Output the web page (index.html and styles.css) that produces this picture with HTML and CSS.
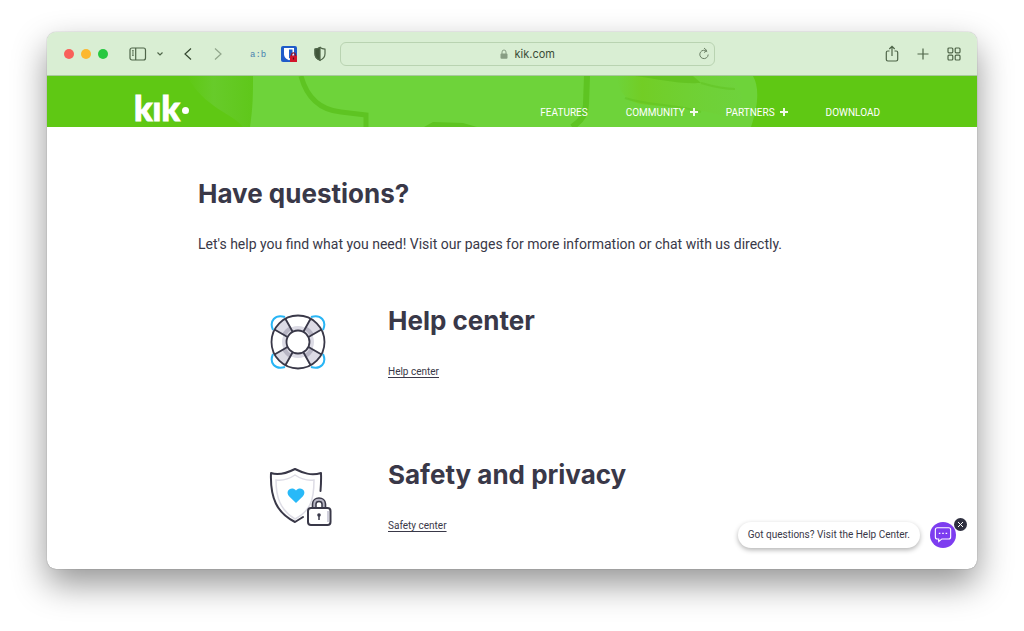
FILE: index.html
```html
<!DOCTYPE html>
<html lang="en">
<head>
    <meta charset="UTF-8">
    <meta name="viewport" content="width=device-width, initial-scale=1.0">
    <title>Kik - Help</title>
    <link rel="stylesheet" href="styles.css">
</head>
<body>
    <div class="window">
        <div class="toolbar">
            <div class="tools tools-left">
                <div class="lights">
                    <span class="light red"></span>
                    <span class="light yellow"></span>
                    <span class="light green"></span>
                </div>
                <button class="tool sidebar" aria-label="Sidebar">
                    <svg width="18" height="14" viewBox="0 0 18 14"><rect x="1" y="1" width="15.5" height="12" rx="2"/><path d="M6.700 1v12M3 3.800h1.800M3 6h1.800M3 8.200h1.800"/></svg>
                </button>
                <button class="tool chevron" aria-label="Tab groups">
                    <svg width="8" height="6" viewBox="0 0 8 6"><path d="M1.500 1.500L4 4l2.500-2.500"/></svg>
                </button>
                <button class="tool back" aria-label="Back">
                    <svg width="10" height="14" viewBox="0 0 10 14"><path d="M8 1.500L2 7l6 5.500"/></svg>
                </button>
                <button class="tool forward" aria-label="Forward">
                    <svg width="10" height="14" viewBox="0 0 10 14"><path d="M2 1.500L8 7l-6 5.500"/></svg>
                </button>
                <button class="tool ab">a:b</button>
                <button class="tool vault" aria-label="Password manager">
                    <svg width="16" height="16" viewBox="0 0 16 16">
                        <rect width="16" height="16" rx="2" fill="#1f5bc9" stroke="none"/>
                        <path d="M3 2h10v6c0 3.400-2.500 5.200-5 6.200C5.500 13.200 3 11.400 3 8z" fill="#fff" stroke="none"/>
                        <path d="M8 3.500h3.500V8c0 2-1.500 3.600-3.500 4.600z" fill="#1f5bc9" stroke="none"/>
                        <rect x="9" y="9.500" width="7" height="6.500" fill="#d2152b" stroke="none"/>
                        <path d="M10.500 10V8.800a2 2 0 0 1 4 0V10" stroke="#8b1530"/>
                        <path d="M12.500 11.500v2" stroke="#5a0a18"/>
                    </svg>
                </button>
                <button class="tool shield" aria-label="Privacy report">
                    <svg width="14" height="16" viewBox="0 0 14 16"><path d="M7 1.500c1.500 1 3.200 1.500 5 1.700v4.500c0 3.300-2 5.300-5 6.600-3-1.300-5-3.300-5-6.600V3.200C3.800 3 5.500 2.500 7 1.500z"/><path d="M7 1.500v12.800c-3-1.300-5-3.300-5-6.600V3.200C3.800 3 5.500 2.500 7 1.500z" class="solid"/></svg>
                </button>
            </div>
            <div class="address">
                <svg class="lock" width="8" height="10" viewBox="0 0 8 10"><rect x="0.500" y="4.500" width="7" height="5.300" rx="1" fill="#889d83"/><path d="M2 5V3a2 2 0 0 1 4 0v2" fill="none" stroke="#889d83"/></svg>
                <span>kik.com</span>
                <button class="tool reload" aria-label="Reload">
                    <svg width="12" height="14" viewBox="0 0 12 14"><path d="M9.200 4.700A4.200 4.200 0 1 0 10.200 7.500M6 1l3 2.700L6 5.500"/></svg>
                </button>
            </div>
            <div class="tools tools-right">
                <button class="tool" aria-label="Share">
                    <svg width="14" height="18" viewBox="0 0 14 18"><path d="M4.500 6H2.800C1.800 6 1.300 6.500 1.300 7.400v7.200c0 .9.500 1.400 1.500 1.400h8.400c1 0 1.500-.5 1.500-1.400V7.400c0-.9-.5-1.400-1.500-1.400H9.500M7 11V1.500M4.300 4L7 1.300 9.700 4"/></svg>
                </button>
                <button class="tool" aria-label="New tab">
                    <svg width="12" height="12" viewBox="0 0 12 12"><path d="M6 .5v11M.5 6h11"/></svg>
                </button>
                <button class="tool" aria-label="Tab overview">
                    <svg width="14" height="14" viewBox="0 0 14 14"><rect x="1" y="1" width="4.800" height="4.800" rx="1"/><rect x="8.200" y="1" width="4.800" height="4.800" rx="1"/><rect x="1" y="8.200" width="4.800" height="4.800" rx="1"/><rect x="8.200" y="8.200" width="4.800" height="4.800" rx="1"/></svg>
                </button>
            </div>
        </div>

        <header class="header">
            <svg class="header-art" viewBox="0 0 930 51" preserveAspectRatio="xMidYMid slice">
                <defs>
                    <linearGradient id="hand" x1="0" x2="1">
                        <stop offset="0" stop-color="#74cb1c" stop-opacity="0"/>
                        <stop offset="0.200" stop-color="#74cb1c" stop-opacity="0.700"/>
                        <stop offset="1" stop-color="#6fd040" stop-opacity="0.300"/>
                    </linearGradient>
                    <linearGradient id="leaf" x1="0" x2="1">
                        <stop offset="0" stop-color="#66cb27" stop-opacity="0"/>
                        <stop offset="0.400" stop-color="#67cb2a"/>
                        <stop offset="1" stop-color="#5fc71a"/>
                    </linearGradient>
                </defs>
                <path d="M140 0h66v51h-10c-8-12-40-20-56-51z" fill="url(#leaf)"/>
                <path d="M206 0h500c6 10 6 28-2 51H203c3-20 3-34 3-51z" fill="#6ed33a"/>
                <path d="M254 0c6 22 20 34 40 36l25 3v12" fill="none" stroke="#5ec422" stroke-width="5"/>
                <path d="M377 51l9-5 30 1 14 4z" fill="#5ec422"/>
                <path d="M540 0l-1 28c0 10-4 17-14 23" fill="none" stroke="#5ec422" stroke-width="6"/>
                <path d="M570 0h110c16 10 20 30 10 44-40-14-70-12-96-16-14-2-24-14-24-28z" fill="url(#hand)"/>
                <path d="M588 0c24 3 40 8 66 7l-8-7z" fill="#5fbf1c" opacity="0.700"/>
                <path d="M654 7c14 4 22 6 34 6M578 22c24 8 50 6 76 14" fill="none" stroke="#5fc21f" stroke-width="2" opacity="0.500"/>
            </svg>
            <div class="header-inner">
                <a href="#" class="logo">kık<span class="logo-dot"></span></a>
                <nav class="nav">
                    <a href="#">FEATURES</a>
                    <a href="#" class="wide">COMMUNITY <i class="plus"></i></a>
                    <a href="#">PARTNERS <i class="plus"></i></a>
                    <a href="#" class="wide">DOWNLOAD</a>
                </nav>
            </div>
        </header>

        <main class="content">
            <h1>Have questions?</h1>
            <p class="intro">Let's help you find what you need! Visit our pages for more information or chat with us directly.</p>

            <section class="topic">
                <div class="topic-icon">
                    <svg width="58" height="58" viewBox="0 0 58 58" fill="none">
                        <g stroke="#28b5f5" stroke-width="2">
                            <path d="M4 17C0 8 6 1 16 4M42 4c10-3 16 4 12 13M54 41c4 9-2 16-12 13M16 54C6 57 0 50 4 41"/>
                        </g>
                        <circle cx="29" cy="29" r="26.500" fill="#fff"/>
                        <g fill="#dcdbe5">
                            <path d="M17.500 5.500L24 18 18 24 5.500 17.500A26 26 0 0 1 17.500 5.500z"/>
                            <path d="M40.500 5.500L34 18 40 24 52.500 17.500A26 26 0 0 0 40.500 5.500z"/>
                            <path d="M17.500 52.500L24 40 18 34 5.500 40.500A26 26 0 0 0 17.500 52.500z"/>
                            <path d="M40.500 52.500L34 40 40 34 52.500 40.500A26 26 0 0 1 40.500 52.500z"/>
                        </g>
                        <circle cx="29" cy="29" r="14" stroke="#dcdbe5" stroke-width="4"/>
                        <path d="M22 15A16 16 0 0 0 15 22M36 15A16 16 0 0 1 43 22M22 43A16 16 0 0 1 15 36M36 43A16 16 0 0 0 43 36" stroke="#b7b5c4" stroke-width="4"/>
                        <g stroke="#393848" stroke-width="1.800">
                            <circle cx="29" cy="29" r="26.500"/>
                            <circle cx="29" cy="29" r="11.500" fill="#fff"/>
                            <path d="M16.500 6L23.500 18.500M5.500 16.500L18.500 24M41.500 6L34.500 18.500M52.500 16.500L39.500 24M16.500 52L23.500 39.500M5.500 41.500L18.500 34M41.500 52L34.500 39.500M52.500 41.500L39.500 34"/>
                        </g>
                    </svg>
                </div>
                <div>
                    <h2>Help center</h2>
                    <a href="#">Help center</a>
                </div>
            </section>

            <section class="topic">
                <div class="topic-icon">
                    <svg width="64" height="60" viewBox="0 0 64 60" fill="none">
                        <path d="M26 8c-6 4-12 6-19 5 0 17 4 30 19 39 15-8 19-18 19-39-7 1-13-1-19-5z" stroke="#dddce5" stroke-width="1.500"/>
                        <path d="M51.500 24c.5-6 .8-10 .5-18-10 3-18 0-26-4C18 6 10 9 2 6c-1 25 6 40 24 49l8-5" stroke="#393848" stroke-width="2" stroke-linecap="round" stroke-linejoin="round"/>
                        <path d="M27 36l-6.700-6.500c-5-5 2-11 6.700-6 4.700-5 11.700 1 6.700 6z" fill="#28b9f8"/>
                        <path d="M43.500 42v-5c0-8 13-8 13 0v5" fill="#b6b5c3" stroke="#393848" stroke-width="1.600"/>
                        <path d="M47 42v-5c0-3.500 6-3.500 6 0v5" fill="#fff" stroke="#393848" stroke-width="1.500"/>
                        <rect x="39" y="41" width="22.500" height="17" rx="3" fill="#fff" stroke="#393848" stroke-width="2"/>
                        <path d="M59 44v11" stroke="#d0cfdb" stroke-width="2"/>
                        <circle cx="50" cy="48" r="1.800" fill="#393848"/>
                        <path d="M50 48v5" stroke="#393848" stroke-width="1.500"/>
                    </svg>
                </div>
                <div>
                    <h2>Safety and privacy</h2>
                    <a href="#">Safety center</a>
                </div>
            </section>
        </main>

        <div class="chat">
            <div class="chat-label">Got questions? Visit the Help Center.</div>
            <button class="chat-button" aria-label="Open chat">
                <svg width="18" height="18" viewBox="0 0 16 16" fill="none" stroke="#fff"><path d="M3 1.500h10c1.200 0 1.800.7 1.800 1.800v6.400c0 1.100-.6 1.800-1.800 1.800H7l-2.800 2.300v-2.300H3c-1.200 0-1.800-.7-1.800-1.800V3.300c0-1.100.6-1.800 1.800-1.800z"/><path d="M4.300 6.500h1.400M7.300 6.500h1.400M10.300 6.500h1.400" stroke-width="1.200"/></svg>
            </button>
            <button class="chat-close" aria-label="Close chat">
                <svg width="7" height="7" viewBox="0 0 7 7" stroke="#fff"><path d="M1 1l5 5M6 1L1 6"/></svg>
            </button>
        </div>
    </div>
</body>
</html>
```
FILE: styles.css
```css
*{
    margin: 0;
    padding: 0;
    box-sizing: border-box;
}
body{
    font-family: Roboto, "Liberation Sans", sans-serif;
    background-color: #fff;
    color: #393848;
    padding: 32px 47px 62px;
}
a{
    color: inherit;
}
button{
    border: none;
    background: none;
    font: inherit;
    cursor: pointer;
}
svg{
    display: block;
}
.window{
    position: relative;
    background-color: #fff;
    border-radius: 9px;
    box-shadow: 0 0 1px rgba(0, 0, 0, 0.5), 0 15px 34px rgba(0, 0, 0, 0.42);
}

/* browser bar */
.toolbar{
    display: grid;
    grid-template-columns: 1fr 375px 1fr;
    align-items: center;
    gap: 13px;
    height: 44px;
    padding: 0 16px 0 17px;
    background-color: #d9eed3;
    border-bottom: 1px solid #a9c99e;
    border-radius: 9px 9px 0 0;
}
.tools{
    display: flex;
    align-items: center;
}
.tools-right{
    justify-content: flex-end;
    gap: 18px;
}
.lights{
    display: flex;
    gap: 7px;
    margin-right: 21px;
}
.light{
    width: 10px;
    height: 10px;
    border-radius: 50%;
}
.red{
    background-color: #f9605a;
}
.yellow{
    background-color: #fcb82f;
}
.green{
    background-color: #27c840;
}
.tool svg{
    fill: none;
    stroke: #4f6549;
    stroke-width: 1.2;
}
.sidebar{
    margin-right: 9px;
}
.chevron{
    margin-right: 19px;
}
.back{
    margin-right: 20px;
}
.back svg{
    stroke: #34472f;
}
.forward{
    margin-right: 27px;
}
.forward svg{
    stroke: #91a68b;
}
.ab{
    padding-top: 2px;
    font-family: "Liberation Mono", monospace;
    font-size: 9px;
    color: #4a83b0;
    margin-right: 15px;
}
.vault{
    margin-right: 16px;
}
.tool .solid{
    fill: #40553a;
}
.address{
    display: flex;
    align-items: center;
    justify-content: center;
    gap: 6px;
    position: relative;
    height: 24px;
    border: 1px solid #b9d3b1;
    border-radius: 6px;
    font-family: Inter, sans-serif;
    font-size: 11px;
    color: #3b4d37;
}
.reload{
    position: absolute;
    right: 4px;
}
.reload svg{
    stroke: #6b8065;
    stroke-width: 1;
}

/* site header */
.header{
    position: relative;
    height: 51px;
    background-color: #5fc814;
}
.header-art{
    position: absolute;
    width: 100%;
    height: 100%;
}
.header-inner{
    position: relative;
    display: flex;
    justify-content: space-between;
    align-items: flex-end;
    max-width: 756px;
    height: 100%;
    margin: 0 auto;
    padding-right: 10px;
}
.logo{
    display: flex;
    align-items: center;
    gap: 2px;
    font-family: Lato, sans-serif;
    font-size: 34px;
    font-weight: 900;
    line-height: 38px;
    color: #fff;
    text-decoration: none;
    -webkit-text-stroke: 1px #fff;
}
.logo-dot{
    width: 7px;
    height: 7px;
    margin-top: 4px;
    border-radius: 50%;
    background-color: #fff;
}
.nav{
    display: flex;
    gap: 28px;
    padding-bottom: 8px;
}
.nav a{
    display: flex;
    align-items: center;
    gap: 5px;
    font-size: 10px;
    line-height: 12px;
    color: #fff;
    text-decoration: none;
}
.nav .wide{
    margin-left: 10px;
}
.plus{
    width: 8px;
    height: 8px;
    margin-bottom: 3px;
    background: linear-gradient(#fff, #fff) center / 8px 2px no-repeat, linear-gradient(#fff, #fff) center / 2px 8px no-repeat;
    opacity: 0.9;
}

/* page */
.content{
    max-width: 628px;
    margin: 0 auto;
    padding: 50px 0 33px;
}
h1, h2{
    font-family: Inter, sans-serif;
    font-size: 26px;
    font-weight: 700;
    line-height: 34px;
}
.intro{
    font-size: 14px;
    line-height: 20px;
    margin: 23px 0 50px;
}
.topic{
    display: grid;
    grid-template-columns: 190px 1fr;
    height: 154px;
}
.topic-icon{
    padding: 9px 0 0 71px;
}
.topic h2{
    margin-bottom: 22px;
}
.topic a{
    font-size: 10px;
    line-height: 16px;
    display: inline-block;
    text-underline-offset: 2px;
}
.topic:last-child{
    height: 78px;
}

/* chat bubble */
.chat{
    position: absolute;
    right: 21px;
    bottom: 21px;
    display: flex;
    align-items: center;
    gap: 10px;
}
.chat-label{
    padding: 0 10px;
    border-radius: 13px;
    font-size: 10px;
    line-height: 26px;
    box-shadow: 0 2px 5px rgba(0, 0, 0, 0.3);
}
.chat-button{
    display: flex;
    align-items: center;
    justify-content: center;
    width: 26px;
    height: 26px;
    border-radius: 50%;
    background-color: #7d3df0;
}
.chat-close{
    position: absolute;
    top: -4px;
    right: -11px;
    display: flex;
    align-items: center;
    justify-content: center;
    width: 13px;
    height: 13px;
    border-radius: 50%;
    background-color: #2f3040;
}
```
